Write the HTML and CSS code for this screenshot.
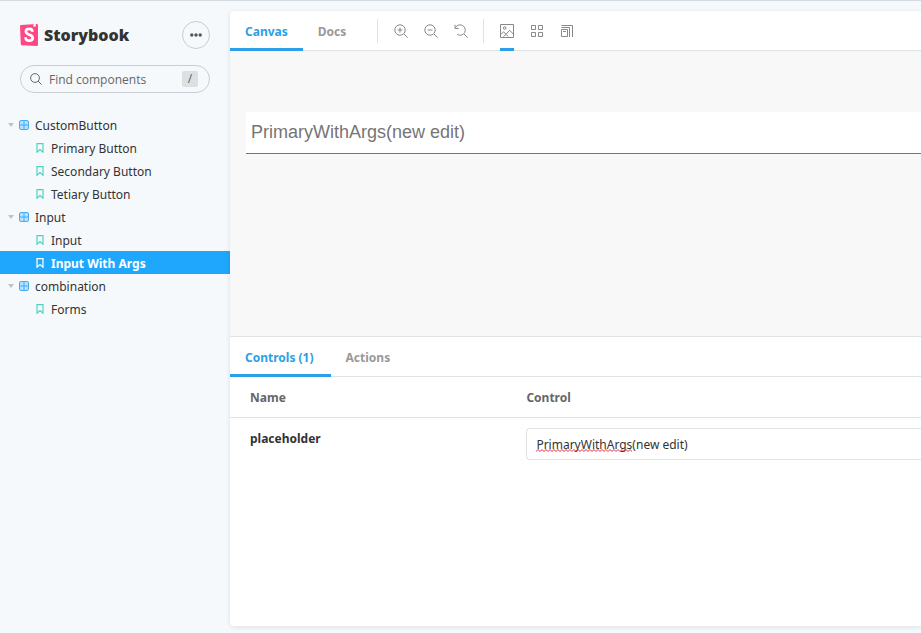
FILE: index.html
```html
<!DOCTYPE html>
<html lang="en">
<head>
<meta charset="utf-8">
<title>Input - Input With Args ⋅ Storybook</title>
<link rel="stylesheet" href="styles.css">
</head>
<body>
<svg class="defs" aria-hidden="true">
  <symbol id="component" viewBox="0 0 10 10"><path fill="#b5e0ff" d="M1 1h8v8H1z"/><path fill="none" stroke="#46acf4" d="M2 .5h6A1.500 1.500 0 0 1 9.500 2v6A1.500 1.500 0 0 1 8 9.500H2A1.500 1.500 0 0 1 .5 8V2A1.500 1.500 0 0 1 2 .5zM5 1v8M1 5h8"/></symbol>
  <symbol id="bookmark" viewBox="0 0 10 10"><path fill="none" stroke="currentColor" stroke-width="1.200" d="M2 .6h6v8.600L5 6.500 2 9.200z"/></symbol>
</svg>
<aside class="sidebar">
  <header class="brand-row">
    <a class="brand" href="#">
      <svg class="logo" viewBox="0 0 18 22" aria-hidden="true">
        <path fill="#ff4785" d="M0 2.200 Q0 1.200 1 1.100L16.500 0Q18 0 18 1.300V20.700Q18 22 16.700 22L2 21.300Q.8 21.200.8 20z"/>
        <path fill="#fff" d="M13.500.2l2.200-.2.100 3-.9-.7-1.500.6z"/>
        <path fill="none" stroke="#fff" stroke-width="2.700" d="M12.500 7.800C12.400 5.300 11.200 4.800 9.300 4.800 7.200 4.800 5.900 5.800 5.900 7.600c0 3.700 6.800 2.500 6.800 6.100 0 2-1.400 3-3.500 3-2.300 0-3.700-.9-3.600-3.400"/>
      </svg>
      <span>Storybook</span>
    </a>
    <button class="menu" aria-label="Shortcuts"><svg width="12" height="4" viewBox="0 0 12 4"><circle cx="1.800" cy="2" r="1.700"/><circle cx="6" cy="2" r="1.700"/><circle cx="10.200" cy="2" r="1.700"/></svg></button>
  </header>
  <div class="search">
    <svg width="12" height="12" viewBox="0 0 12 12" fill="none" stroke="#666" aria-hidden="true"><circle cx="5" cy="5" r="4.400"/><path d="M8.200 8.200l3.400 3.400"/></svg>
    <input type="search" placeholder="Find components" aria-label="Find components">
    <kbd>/</kbd>
  </div>
  <nav class="tree">
    <button class="group"><i class="caret"></i><svg class="node"><use href="#component"/></svg><span>CustomButton</span></button>
    <a class="story" href="#"><svg class="node"><use href="#bookmark"/></svg><span>Primary Button</span></a>
    <a class="story" href="#"><svg class="node"><use href="#bookmark"/></svg><span>Secondary Button</span></a>
    <a class="story" href="#"><svg class="node"><use href="#bookmark"/></svg><span>Tetiary Button</span></a>
    <button class="group"><i class="caret"></i><svg class="node"><use href="#component"/></svg><span>Input</span></button>
    <a class="story" href="#"><svg class="node"><use href="#bookmark"/></svg><span>Input</span></a>
    <a class="story selected" href="#" aria-current="page"><svg class="node"><use href="#bookmark"/></svg><span>Input With Args</span></a>
    <button class="group"><i class="caret"></i><svg class="node"><use href="#component"/></svg><span>combination</span></button>
    <a class="story" href="#"><svg class="node"><use href="#bookmark"/></svg><span>Forms</span></a>
  </nav>
</aside>
<main class="main">
  <div class="bar">
    <button class="tab active">Canvas</button>
    <button class="tab">Docs</button>
    <span class="divider"></span>
    <button class="tool" aria-label="Zoom in"><svg viewBox="0 0 14 14"><circle cx="6" cy="6" r="5.200"/><path d="M10 10l3.700 3.700M3.500 6h5M6 3.500v5"/></svg></button>
    <button class="tool" aria-label="Zoom out"><svg viewBox="0 0 14 14"><circle cx="6" cy="6" r="5.200"/><path d="M10 10l3.700 3.700M3.500 6h5"/></svg></button>
    <button class="tool" aria-label="Reset zoom"><svg viewBox="0 0 14 14"><path d="M1.500 3.500A5.200 5.200 0 1 1 3.400 10.500M1 .8v3.700h3.700M10 10l3.700 3.700"/></svg></button>
    <span class="divider"></span>
    <button class="tool active" aria-label="Change background"><svg viewBox="0 0 14 14"><path d="M.5.5h13v13H.5zM1 10.500l2.500-2.800L6 10.300l3.700-4 3.800 4M3.500 12.500L6 10.300l2 2"/><circle cx="4.700" cy="4" r="1.300"/></svg></button>
    <button class="tool" aria-label="Apply grid"><svg viewBox="0 0 14 14"><path d="M1.500 1.500h4v4h-4zM8.500 1.500h4v4h-4zM1.500 8.500h4v4h-4zM8.500 8.500h4v4h-4z"/></svg></button>
    <button class="tool" aria-label="Change viewport"><svg viewBox="0 0 14 14"><path d="M1.500 5.500h6v7h-6zM1.500 3.500h8v9.500M1.500 1.500h11v11.500M3 7.500h3"/></svg></button>
  </div>
  <section class="preview">
    <input type="text" placeholder="PrimaryWithArgs(new edit)" aria-label="Preview input">
  </section>
  <section class="panel">
    <div class="bar">
      <button class="tab active">Controls (1)</button>
      <button class="tab">Actions</button>
    </div>
    <table class="args">
      <thead><tr><th>Name</th><th>Control</th></tr></thead>
      <tbody><tr>
        <td><label for="placeholder">placeholder</label></td>
        <td><div class="field">
          <textarea id="placeholder" rows="1" spellcheck="false">PrimaryWithArgs(new edit)</textarea>
          <svg class="squiggle" aria-hidden="true"><defs><pattern id="wave" width="4" height="3" patternUnits="userSpaceOnUse"><path fill="none" stroke="#e02a3a" d="M-1 1.500L0 2.500 2 .5 4 2.500 5 1.500"/></pattern></defs><rect width="100%" height="3" fill="url(#wave)"/></svg>
        </div></td>
      </tr></tbody>
    </table>
  </section>
</main>
</body>
</html>
```
FILE: styles.css
```css
* { box-sizing: border-box; }

body {
  margin: 0;
  min-height: 100vh;
  display: flex;
  overflow: hidden;
  border-top: 1px solid #d5dae0;
  background: #f6f9fc;
  color: #333;
  font: 12px/16px "Noto Sans", "Open Sans", sans-serif;
}

button, input, textarea {
  margin: 0;
  padding: 0;
  border: 0;
  background: none;
  color: inherit;
  font: inherit;
  outline: 0;
}

a { color: inherit; text-decoration: none; }

.defs { position: absolute; width: 0; height: 0; }

.sidebar { flex: 0 0 230px; min-width: 0; }

.brand-row {
  display: flex;
  align-items: center;
  justify-content: space-between;
  padding: 20px 20px 0;
}

.brand {
  display: flex;
  align-items: center;
  gap: 6px;
  font: 800 16px/24px "Open Sans", sans-serif;
}

.logo { width: 18px; height: 22px; }

.menu {
  display: grid;
  place-items: center;
  width: 28px;
  height: 28px;
  border: 1px solid #c8cdd1;
  border-radius: 50%;
  fill: #555;
}

.search {
  display: flex;
  align-items: center;
  gap: 7px;
  height: 28px;
  margin: 16px 20px;
  padding: 0 11px 0 9px;
  border: 1px solid #c8cdd1;
  border-radius: 28px;
}

.search svg { flex: none; }

.search input {
  flex: 1;
  width: 100%;
  min-width: 0;
  padding-top: 2px;
  font-family: "Open Sans", sans-serif;
}

.search input::placeholder { color: #666; opacity: 1; }

kbd {
  flex: none;
  width: 16px;
  border-radius: 2px;
  background: #dde0e3;
  color: #666;
  font: 12px/16px "Noto Sans", sans-serif;
  text-align: center;
}

.tree { padding-top: 4px; }

.group, .story {
  display: flex;
  align-items: center;
  gap: 6px;
  width: 100%;
  height: 23px;
}

.group span, .story span { padding-top: 2px; }

.group { padding-left: 8px; }

.story { padding-left: 35px; color: #333; }

.story .node { color: #4fd3c0; }

.story.selected { background: #1ea7fd; color: #fff; font-weight: 700; }

.story.selected .node { color: #fff; }

.node { flex: none; width: 10px; height: 10px; }

.caret {
  margin-right: -1px;
  border: 3px solid transparent;
  border-top: 4px solid #bfc3c7;
  border-bottom: 0;
}

.main {
  flex: 1;
  min-width: 0;
  display: grid;
  grid-template-rows: 40px minmax(120px, 57fr) minmax(120px, 58fr);
  margin: 10px 0 7px;
  overflow: hidden;
  border-radius: 4px 0 0 4px;
  background: #fff;
  box-shadow: 0 1px 5px rgba(0, 0, 0, .1);
}

.bar {
  display: flex;
  height: 40px;
  border-bottom: 1px solid #e0e3e5;
}

.tab {
  padding: 4px 15px 0;
  height: 40px;
  border-bottom: 3px solid transparent;
  color: #999;
  font-weight: 700;
}

.panel .tab { padding-right: 17px; }

.tab.active { border-color: #2ba0e8; color: #2ba0e8; }

.divider {
  width: 1px;
  height: 24px;
  margin: 8px 8px 0 7px;
  background: #e0e3e5;
}

.tab + .divider { margin-left: 16px; }

.tool {
  display: grid;
  place-items: center;
  width: 14px;
  height: 40px;
  margin: 0 8px;
  padding-top: 3px;
  border-bottom: 3px solid transparent;
}

.tool.active { border-color: #2ba0e8; }

.tool svg {
  width: 14px;
  height: 14px;
  fill: none;
  stroke: #888;
}

.preview {
  padding: 61px 0 16px 16px;
  background: #f8f8f8;
}

.preview input {
  display: block;
  width: 100%;
  height: 42px;
  padding: 0 5px;
  border-bottom: 1px solid #757575;
  background: #fff;
  font: 18px/20px "Liberation Sans", Arial, sans-serif;
}

.preview input::placeholder { color: #757575; opacity: 1; }

.panel { border-top: 1px solid #e0e3e5; }

.args {
  width: 100%;
  border-collapse: collapse;
  table-layout: fixed;
  text-align: left;
}

.args th, .args td { padding: 10px 0 10px 20px; vertical-align: top; }

.args th:first-child { width: 40%; }

.args th { height: 40px; padding: 13px 0 10px 20px; color: #666; }

.args thead { border-bottom: 1px solid #e0e3e5; }

.args label { display: block; padding-top: 3px; font-weight: 700; }

.field { position: relative; }

.field textarea {
  display: block;
  width: 100%;
  height: 32px;
  padding: 8px 0 6px 9px;
  overflow: hidden;
  resize: none;
  border: 1px solid #e0e3e5;
  border-right: 0;
  border-radius: 4px 0 0 4px;
}

.squiggle {
  position: absolute;
  left: 10px;
  top: 21px;
  width: 96px;
  height: 3px;
}
```
